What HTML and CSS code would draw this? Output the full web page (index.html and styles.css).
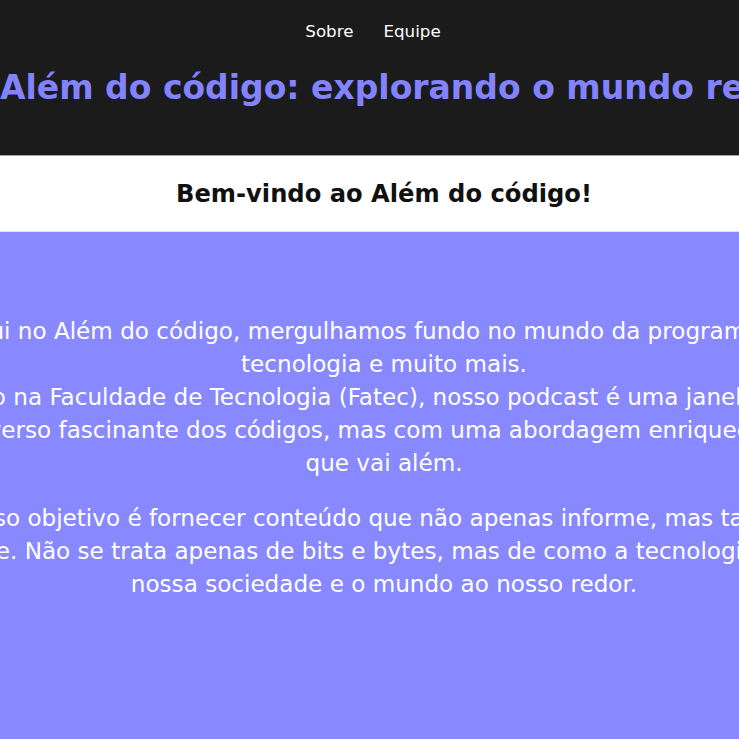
FILE: index.html
```html
<!DOCTYPE html>
<html lang="pt-BR">
<head>
<meta charset="utf-8">
<title>Além do código</title>
<link rel="stylesheet" href="styles.css">
</head>
<body>
<div class="page">
  <header class="site-header">
    <nav class="nav">
      <a href="#sobre" class="nav-link">Sobre</a>
      <a href="#equipe" class="nav-link">Equipe</a>
    </nav>
    <h1 class="title">Além do código: explorando o mundo real da tecnologia</h1>
  </header>
  <section class="welcome">
    <h2 class="welcome-title">Bem-vindo ao Além do código!</h2>
  </section>
  <section class="about" id="sobre">
    <p class="about-text">Aqui no Além do código, mergulhamos fundo no mundo da programação, tecnologia e muito mais.<br>Criado na Faculdade de Tecnologia (Fatec), nosso podcast é uma janela para o universo fascinante dos códigos, mas com uma abordagem enriquecedora que vai além.</p>
    <p class="about-text">Nosso objetivo é fornecer conteúdo que não apenas informe, mas também inspire. Não se trata apenas de bits e bytes, mas de como a tecnologia molda nossa sociedade e o mundo ao nosso redor.</p>
  </section>
</div>
</body>
</html>
```
FILE: styles.css
```css
html {
  overflow: hidden;
}

body {
  margin: 0;
  font-family: "DejaVu Sans", Verdana, sans-serif;
  background: #8888ff;
}

.page {
  width: 768px;
}

.site-header {
  background: #1b1b1b;
  border-bottom: 1px solid #a3a3a3;
  padding: 21px 0 47px;
  display: flex;
  flex-direction: column;
}

.nav {
  display: flex;
  justify-content: center;
  gap: 30px;
  padding-right: 22px;
  font-size: 16.7px;
  line-height: 20px;
}

.nav-link {
  color: #ffffff;
  text-decoration: none;
}

.title {
  margin: 27px 0 0;
  font-size: 33px;
  line-height: 40px;
  font-weight: bold;
  color: #8383ff;
  text-align: center;
  white-space: nowrap;
}

.welcome {
  background: #ffffff;
  border-bottom: 1px solid #e4e4e4;
  padding: 23px 0 22px;
}

.welcome-title {
  margin: 0;
  font-size: 24.2px;
  line-height: 30px;
  font-weight: bold;
  color: #111111;
  text-align: center;
}

.about {
  background: #8888ff;
  min-height: 507px;
  padding-top: 83px;
  box-sizing: border-box;
  display: flex;
  flex-direction: column;
  align-items: center;
  gap: 22px;
}

.about-text {
  flex: none;
  width: 910px;
  margin: 0;
  color: #ffffff;
  font-size: 23.1px;
  line-height: 33px;
  text-align: center;
}
```
